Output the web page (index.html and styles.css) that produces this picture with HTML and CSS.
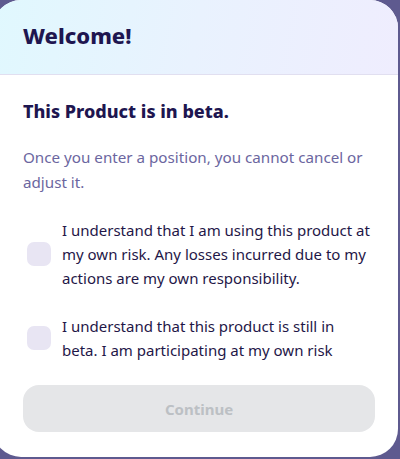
FILE: index.html
```html
<!DOCTYPE html>
<html>
<head>
<meta charset="utf-8">
<link rel="stylesheet" href="styles.css">
</head>
<body>
<div class="modal">
  <div class="modal-header">
    <h1 class="modal-title">Welcome!</h1>
  </div>
  <div class="modal-body">
    <h2 class="beta-title">This Product is in beta.</h2>
    <p class="beta-text">Once you enter a position, you cannot cancel or adjust it.</p>
    <label class="check-row">
      <span class="check-box"></span>
      <span class="check-label">I understand that I am using this product at my own risk. Any losses incurred due to my actions are my own responsibility.</span>
    </label>
    <label class="check-row second">
      <span class="check-box"></span>
      <span class="check-label">I understand that this product is still in beta. I am participating at my own risk</span>
    </label>
    <button class="continue-btn" disabled>Continue</button>
  </div>
</div>
</body>
</html>
```

FILE: styles.css
```css
html, body {
  margin: 0;
  padding: 0;
}
body {
  width: 400px;
  height: 459px;
  overflow: hidden;
  background: #5e5a8f;
  font-family: "Noto Sans", "Liberation Sans", sans-serif;
}
.modal {
  width: 405px;
  height: 457px;
  margin-left: -7px;
  background: #ffffff;
  border-radius: 28px;
  overflow: hidden;
  box-sizing: border-box;
}
.modal-header {
  height: 75px;
  box-sizing: border-box;
  border-bottom: 1px solid #e1dff0;
  background: linear-gradient(100deg, #e0f8fe 0%, #e9f2fe 50%, #efedfe 100%);
  display: flex;
  align-items: center;
  padding-left: 30px;
  padding-bottom: 5px;
}
.modal-title {
  margin: 0;
  font-size: 22px;
  line-height: 28px;
  font-weight: 800;
  color: #1e1650;
}
.modal-body {
  padding: 24px 23px 0 30px;
}
.beta-title {
  margin: 0;
  font-size: 18px;
  line-height: 24px;
  font-weight: 800;
  color: #1e1650;
}
.beta-text {
  margin: 22px 0 0;
  font-size: 15.2px;
  line-height: 25px;
  color: #6b66a0;
}
.check-row {
  display: flex;
  align-items: center;
  gap: 11px;
  margin-top: 23px;
  padding-left: 4px;
  padding-right: 3px;
}
.check-row.second {
  margin-top: 24px;
}
.check-box {
  flex: 0 0 24px;
  width: 24px;
  height: 24px;
  border-radius: 7px;
  background: #e8e5f3;
}
.check-label {
  font-size: 15px;
  line-height: 24px;
  font-weight: 400;
  color: #1f1748;
}
.continue-btn {
  display: block;
  width: 100%;
  height: 47px;
  margin-top: 23px;
  border: none;
  border-radius: 16px;
  background: #e5e6e8;
  color: #bcc0c4;
  font-family: inherit;
  font-size: 15px;
  font-weight: 700;
}
```
